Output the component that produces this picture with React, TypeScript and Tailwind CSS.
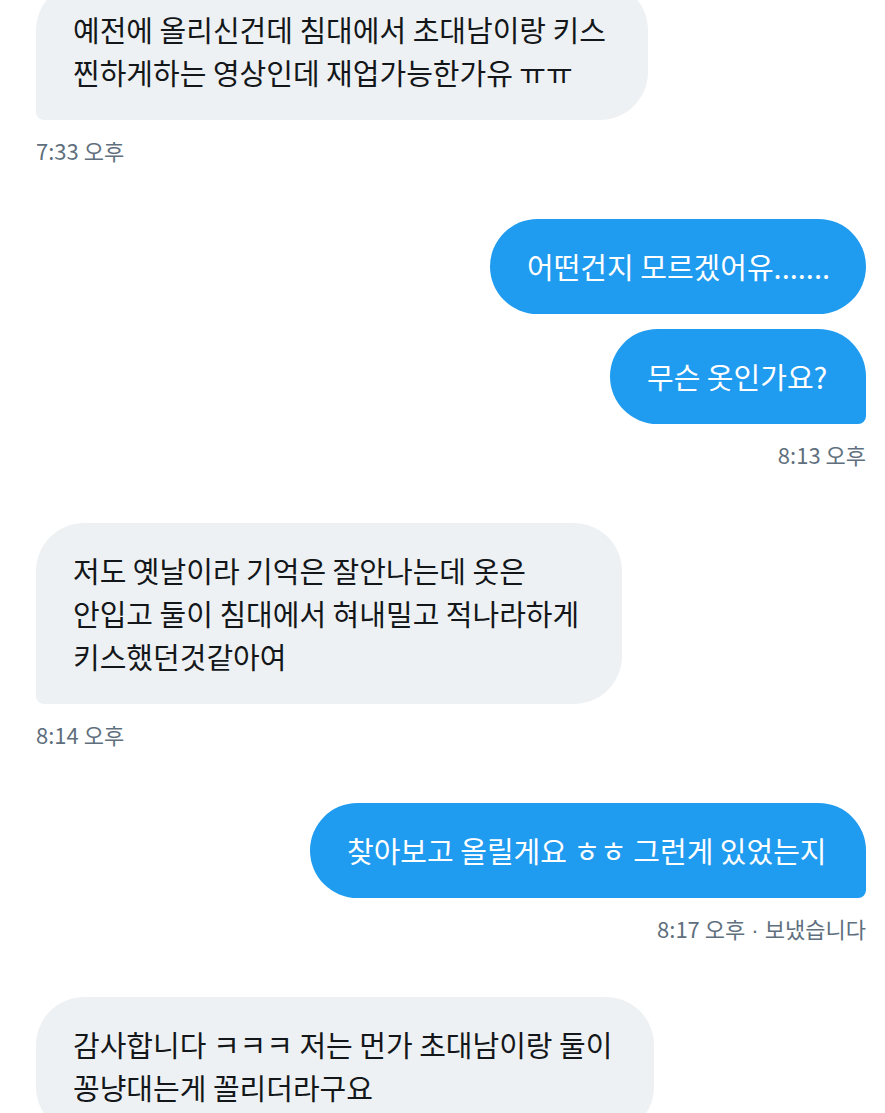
import React from "react";

const font = { fontFamily: '"Noto Sans CJK KR", "Noto Sans", sans-serif' };

function Gray({ w, lines, className = "" }: { w: string; lines: string[]; className?: string }) {
  return (
    <div
      className={`${w} bg-[#eef1f3] text-[#14171a] text-[29px] leading-[43px] pl-[37px] py-[26px] rounded-[48px] whitespace-nowrap ${className}`}
    >
      {lines.map((l, i) => (
        <div key={i}>{l}</div>
      ))}
    </div>
  );
}

function Blue({ w, text, className = "" }: { w: string; text: string; className?: string }) {
  return (
    <div
      className={`${w} self-end bg-[#1f9bf0] text-white text-[29px] leading-[43px] pl-[37px] py-[26px] rounded-[48px] whitespace-nowrap ${className}`}
    >
      {text}
    </div>
  );
}

function Time({ children, right }: { children: React.ReactNode; right?: boolean }) {
  return (
    <div
      className={`mt-[16px] mb-[55px] h-[28px] leading-[28px] text-[22px] text-[#606f7d] ${right ? "self-end" : "self-start"}`}
    >
      {children}
    </div>
  );
}

export default function App() {
  return (
    <div className="w-[885px] h-[1113px] overflow-hidden bg-white" style={font}>
      <div className="flex flex-col pl-[36px] pr-[19px] mt-[-18px]">
        <Gray
          w="w-[612px]"
          className="rounded-bl-[8px]"
          lines={["예전에 올리신건데 침대에서 초대남이랑 키스", "찐하게하는 영상인데 재업가능한가유 ㅠㅠ"]}
        />
        <Time>7:33 오후</Time>
        <Blue w="w-[376px]" text="어떤건지 모르겠어유......." />
        <Blue w="w-[256px]" className="mt-[15px] rounded-br-[8px]" text="무슨 옷인가요?" />
        <Time right>8:13 오후</Time>
        <Gray
          w="w-[586px]"
          className="rounded-bl-[8px]"
          lines={["저도 옛날이라 기억은 잘안나는데 옷은", "안입고 둘이 침대에서 혀내밀고 적나라하게", "키스했던것같아여"]}
        />
        <Time>8:14 오후</Time>
        <Blue w="w-[556px]" className="rounded-br-[8px]" text="찾아보고 올릴게요 ㅎㅎ 그런게 있었는지" />
        <Time right>
          8:17 오후<span className="font-['Liberation_Sans']"> · </span>보냈습니다
        </Time>
        <Gray
          w="w-[618px]"
          lines={["감사합니다 ㅋㅋㅋ 저는 먼가 초대남이랑 둘이", "꽁냥대는게 꼴리더라구요"]}
        />
      </div>
    </div>
  );
}
